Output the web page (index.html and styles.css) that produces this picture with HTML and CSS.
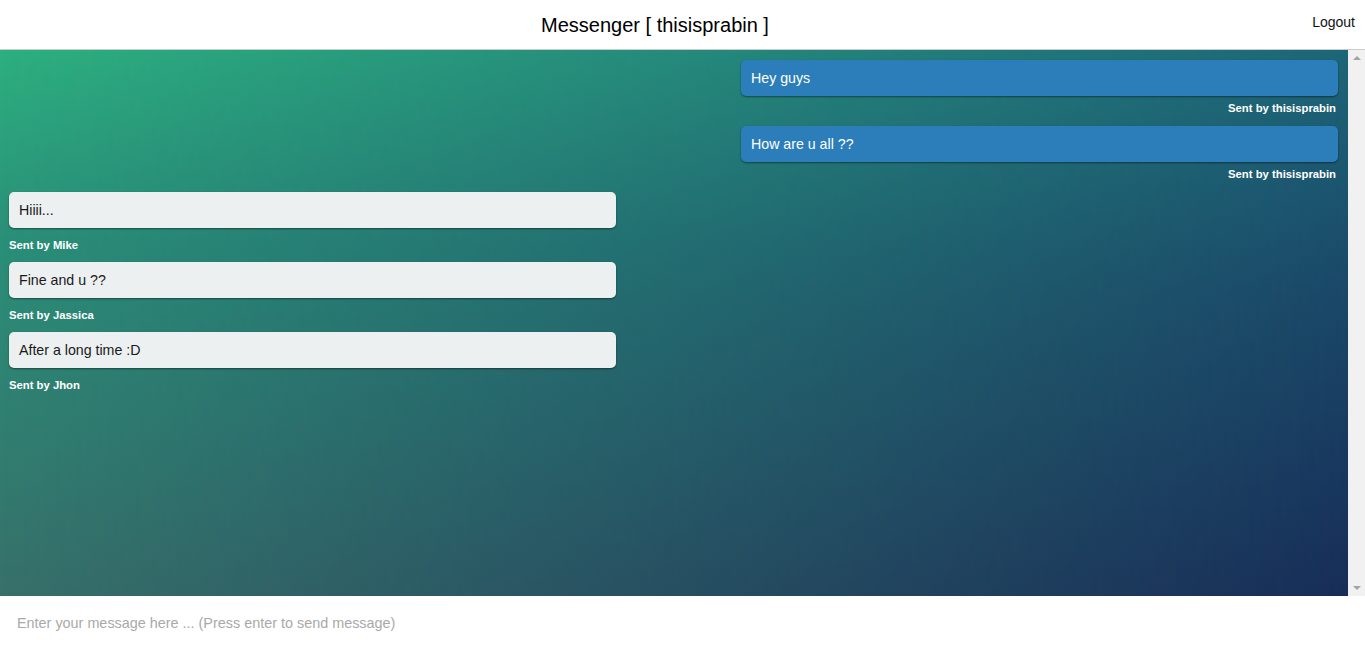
FILE: index.html
```html
<!DOCTYPE html>
<html lang="en">
<head>
<meta charset="utf-8">
<title>Messenger</title>
<link rel="stylesheet" href="styles.css">
</head>
<body>
<div class="app">
  <header class="topbar">
    <h1 class="title">Messenger [ thisisprabin ]</h1>
    <a class="logout" href="#">Logout</a>
  </header>
  <main class="chat-wrap">
    <section class="chat">
      <div class="msg mine">
        <div class="bubble">Hey guys</div>
        <div class="sender">Sent by thisisprabin</div>
      </div>
      <div class="msg mine">
        <div class="bubble">How are u all ??</div>
        <div class="sender">Sent by thisisprabin</div>
      </div>
      <div class="msg theirs">
        <div class="bubble">Hiiii...</div>
        <div class="sender">Sent by Mike</div>
      </div>
      <div class="msg theirs">
        <div class="bubble">Fine and u ??</div>
        <div class="sender">Sent by Jassica</div>
      </div>
      <div class="msg theirs">
        <div class="bubble">After a long time :D</div>
        <div class="sender">Sent by Jhon</div>
      </div>
    </section>
    <div class="scrollbar">
      <span class="arrow up"></span>
      <span class="arrow down"></span>
    </div>
  </main>
  <footer class="composer">
    <input class="input" type="text" placeholder="Enter your message here ... (Press enter to send message)">
  </footer>
</div>
</body>
</html>
```
FILE: styles.css
```css
* { box-sizing: border-box; }
html, body { margin: 0; padding: 0; height: 100%; }
body {
  font-family: "Liberation Sans", Arial, sans-serif;
  background: #fff;
  overflow: hidden;
}
.app {
  display: flex;
  flex-direction: column;
  height: 647px;
}
.topbar {
  height: 50px;
  flex: none;
  display: flex;
  align-items: center;
  border-bottom: 1px solid #c9cccc;
  background: #fff;
}
.title {
  flex: 1;
  margin: 0;
  text-align: center;
  font-size: 20px;
  font-weight: normal;
  color: #000;
  line-height: 24px;
  padding-top: 1px;
}
.logout {
  width: 55px;
  padding-right: 10px;
  text-align: right;
  font-size: 14px;
  color: #111;
  text-decoration: none;
  margin-top: -6px;
}
.chat-wrap {
  height: 546px;
  flex: none;
  display: flex;
}
.chat {
  flex: 1;
  position: relative;
  background: linear-gradient(to bottom, #2db07f 0%, #2a8f78 35%, #37706a 100%);
  display: flex;
  flex-direction: column;
  padding-top: 10px;
  overflow: hidden;
}
.chat::before {
  content: "";
  position: absolute;
  inset: 0;
  background: linear-gradient(to bottom, #1d6578 0%, #1a4768 45%, #172d58 100%);
  -webkit-mask-image: linear-gradient(to right, transparent 0%, #000 100%);
  mask-image: linear-gradient(to right, transparent 0%, #000 100%);
}
.msg {
  position: relative;
  z-index: 1;
  display: flex;
  flex-direction: column;
}
.bubble {
  height: 36px;
  line-height: 36px;
  padding: 0 10px;
  font-size: 14.2px;
  border-radius: 5px;
  box-shadow: 0 1px 2px rgba(0, 0, 0, 0.45);
}
.sender {
  font-size: 11.3px;
  font-weight: bold;
  color: #fff;
  line-height: 14px;
}
.mine {
  align-items: flex-end;
  padding-right: 10px;
  margin-bottom: 11px;
}
.mine .bubble {
  width: 597px;
  background: #2b7eb9;
  color: #fff;
}
.mine .sender {
  margin-top: 5px;
  padding-right: 2px;
}
.theirs {
  align-items: flex-start;
  padding-left: 9px;
  margin-bottom: 10px;
}
.theirs .bubble {
  width: 607px;
  background: #ecf0f1;
  color: #1a1a1a;
}
.theirs .sender {
  margin-top: 10px;
}
.scrollbar {
  width: 17px;
  flex: none;
  background: #f1f1f1;
  display: flex;
  flex-direction: column;
  justify-content: space-between;
  align-items: center;
  padding: 6px 0 6px;
}
.arrow {
  width: 0;
  height: 0;
  border-left: 4px solid transparent;
  border-right: 4px solid transparent;
}
.arrow.up { border-bottom: 4px solid #a3a3a3; }
.arrow.down { border-top: 4px solid #a3a3a3; }
.composer {
  flex: 1;
  display: flex;
  background: #fff;
}
.input {
  flex: 1;
  border: none;
  outline: none;
  padding: 2px 17px 0;
  font-family: "Liberation Sans", Arial, sans-serif;
  font-size: 14.4px;
  color: #333;
  background: #fff;
}
.input::placeholder { color: #a9a9a9; }
```
